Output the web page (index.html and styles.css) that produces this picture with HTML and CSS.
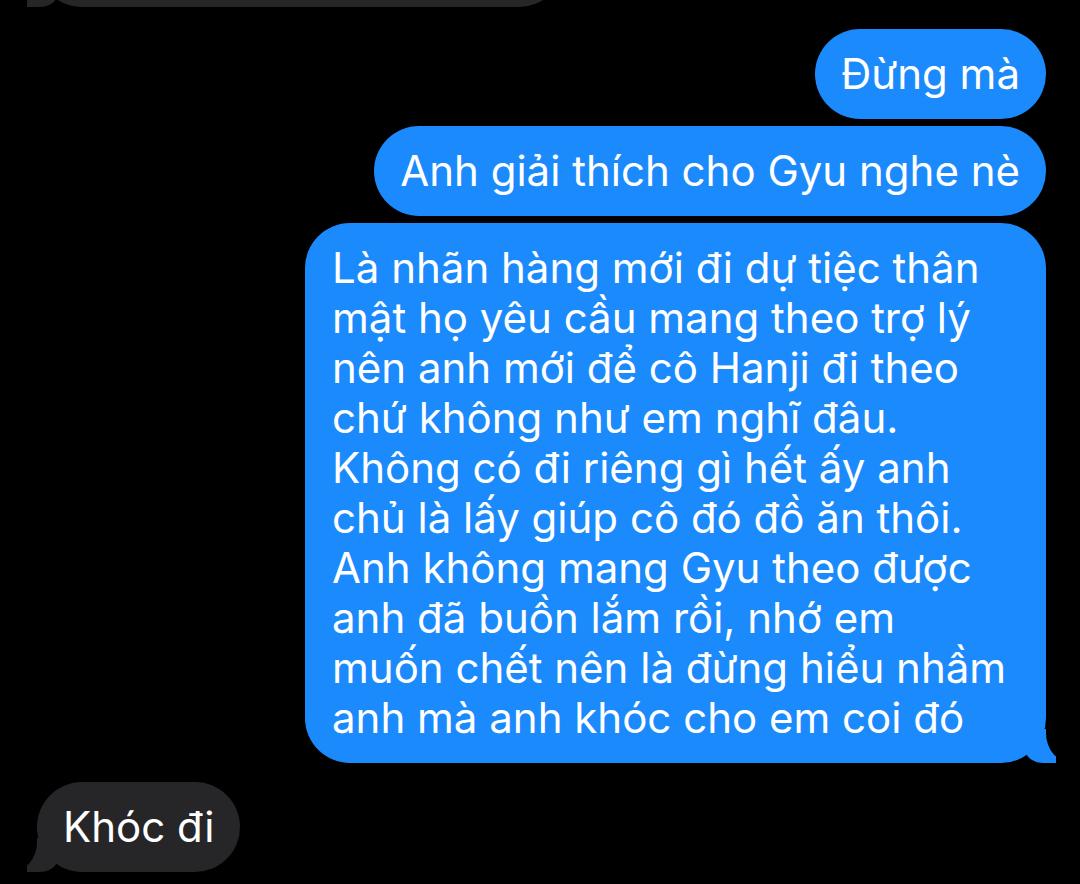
FILE: index.html
```html
<!DOCTYPE html>
<html lang="vi">
<head>
<meta charset="utf-8">
<title>Messages</title>
<link rel="stylesheet" href="styles.css">
</head>
<body>
<main class="chat">
  <section class="group received first">
    <div class="bubble gray tail top-cut"></div>
  </section>
  <section class="group sent">
    <div class="bubble blue">Đừng mà</div>
    <div class="bubble blue">Anh giải thích cho Gyu nghe nè</div>
    <div class="bubble blue tail long">Là nhãn hàng mới đi dự tiệc thân<br>mật họ yêu cầu mang theo trợ lý<br>nên anh mới để cô Hanji đi theo<br>chứ không như em nghĩ đâu.<br>Không có đi riêng gì hết ấy anh<br>chủ là lấy giúp cô đó đồ ăn thôi.<br>Anh không mang Gyu theo được<br>anh đã buồn lắm rồi, nhớ em<br>muốn chết nên là đừng hiểu nhầm<br>anh mà anh khóc cho em coi đó</div>
  </section>
  <section class="group received">
    <div class="bubble gray tail">Khóc đi</div>
  </section>
</main>
</body>
</html>
```
FILE: styles.css
```css
html, body {
  margin: 0;
  padding: 0;
  background: #000;
}
body {
  width: 1080px;
  height: 884px;
  overflow: hidden;
  font-family: Inter, "Noto Sans", sans-serif;
  color: #fff;
}
.chat {
  display: flex;
  flex-direction: column;
  padding: 0 34px 0 37px;
}
.group {
  display: flex;
  flex-direction: column;
  gap: 7px;
}
.group.sent {
  align-items: flex-end;
  margin-top: 22px;
}
.group.received {
  align-items: flex-start;
  margin-top: 19px;
}
.group.first {
  margin-top: -83px;
}
.bubble {
  position: relative;
  font-size: 42px;
  line-height: 50px;
  padding: 20px 26px;
  border-radius: 45px;
  white-space: nowrap;
}
.blue {
  background: #1b8afc;
}
.gray {
  background: #262628;
}
.top-cut {
  width: 527px;
  height: 50px;
  box-sizing: content-box;
  padding: 20px 0;
}
.long {
  width: 688px;
  padding-left: 27px;
  padding-right: 26px;
}
.tail::before,
.tail::after {
  content: "";
  position: absolute;
  bottom: 0;
}
.sent .tail::before {
  right: -10px;
  width: 30px;
  height: 34px;
  background: #1b8afc;
  border-bottom-left-radius: 18px 12px;
}
.sent .tail::after {
  right: -26px;
  width: 26px;
  height: 34px;
  background: #000;
  border-bottom-left-radius: 26px 30px;
}
.received .tail::before {
  left: -10px;
  width: 30px;
  height: 34px;
  background: #262628;
  border-bottom-right-radius: 18px 12px;
}
.received .tail::after {
  left: -26px;
  width: 26px;
  height: 34px;
  background: #000;
  border-bottom-right-radius: 26px 30px;
}
```
